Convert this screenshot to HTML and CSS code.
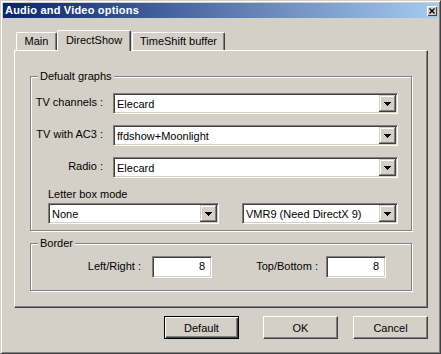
FILE: index.html
```html
<!DOCTYPE html>
<html>
<head>
<meta charset="utf-8">
<link rel="stylesheet" href="styles.css">
</head>
<body>
<div class="window">
  <div class="titlebar">
    <span class="title">Audio and Video options</span>
    <span class="close"><svg width="6" height="6" viewBox="0 0 6 6"><path d="M0.5 0.5l5 5M5.5 0.5l-5 5" stroke="#000" stroke-width="1.3"/></svg></span>
  </div>
  <div class="tabs">
    <div class="tab tab-main">Main</div>
    <div class="tab tab-active">DirectShow</div>
    <div class="tab tab-ts">TimeShift buffer</div>
  </div>
  <div class="panel">
    <div class="group g1">
      <div class="legend">Defualt graphs</div>
      <div class="row first">
        <span class="lbl">TV channels :</span>
        <div class="combo wide"><span class="val">Elecard</span><span class="drop"><svg width="7" height="4" viewBox="0 0 7 4"><path d="M0 0h7v1H0zM1 1h5v1H1zM2 2h3v1H2zM3 3h1v1H3z" fill="#000"/></svg></span></div>
      </div>
      <div class="row">
        <span class="lbl">TV with AC3 :</span>
        <div class="combo wide"><span class="val">ffdshow+Moonlight</span><span class="drop"><svg width="7" height="4" viewBox="0 0 7 4"><path d="M0 0h7v1H0zM1 1h5v1H1zM2 2h3v1H2zM3 3h1v1H3z" fill="#000"/></svg></span></div>
      </div>
      <div class="row">
        <span class="lbl">Radio :</span>
        <div class="combo wide"><span class="val">Elecard</span><span class="drop"><svg width="7" height="4" viewBox="0 0 7 4"><path d="M0 0h7v1H0zM1 1h5v1H1zM2 2h3v1H2zM3 3h1v1H3z" fill="#000"/></svg></span></div>
      </div>
      <div class="lbl-top">Letter box mode</div>
      <div class="pair">
        <div class="combo c-none"><span class="val">None</span><span class="drop"><svg width="7" height="4" viewBox="0 0 7 4"><path d="M0 0h7v1H0zM1 1h5v1H1zM2 2h3v1H2zM3 3h1v1H3z" fill="#000"/></svg></span></div>
        <div class="combo c-vmr"><span class="val">VMR9 (Need DirectX 9)</span><span class="drop"><svg width="7" height="4" viewBox="0 0 7 4"><path d="M0 0h7v1H0zM1 1h5v1H1zM2 2h3v1H2zM3 3h1v1H3z" fill="#000"/></svg></span></div>
      </div>
    </div>
    <div class="group g2">
      <div class="legend">Border</div>
      <div class="brow">
        <span class="lbl lbl-lr">Left/Right :</span>
        <div class="field">8</div>
        <span class="lbl lbl-tb">Top/Bottom :</span>
        <div class="field">8</div>
      </div>
    </div>
  </div>
  <div class="buttons">
    <button class="btn btn-default">Default</button>
    <button class="btn btn-ok">OK</button>
    <button class="btn btn-cancel">Cancel</button>
  </div>
</div>
</body>
</html>
```
FILE: styles.css
```css
html, body {
  margin: 0;
  padding: 0;
  background: #d4d0c8;
}
body {
  font-family: "Liberation Sans", Arial, sans-serif;
  font-size: 11px;
  color: #000;
}
.window {
  width: 441px;
  height: 354px;
  box-sizing: border-box;
  background: #d4d0c8;
  border: 1px solid;
  border-color: #d4d0c8 #404040 #404040 #d4d0c8;
  box-shadow: inset 1px 1px #fff, inset -1px -1px #808080;
  padding: 2px;
}
.titlebar {
  height: 15px;
  background: linear-gradient(to right, #0a246a, #a6caf0);
  display: flex;
  align-items: center;
  justify-content: space-between;
  padding: 0 1px 0 2px;
  color: #fff;
  font-weight: bold;
  font-size: 11px;
  letter-spacing: 0.2px;
}
.title {
  line-height: 15px;
}
.close {
  width: 10px;
  height: 10px;
  box-sizing: border-box;
  background: #d4d0c8;
  box-shadow: inset 1px 1px #fff, inset -1px -1px #404040;
  display: flex;
  align-items: center;
  justify-content: center;
}
.tabs {
  display: flex;
  align-items: flex-end;
  height: 20px;
  margin: 12px 0 0 13px;
}
.tab {
  box-sizing: border-box;
  height: 18px;
  line-height: 16px;
  text-align: center;
  border-top: 1px solid #fff;
  border-left: 1px solid #fff;
  border-right: 1px solid #404040;
  box-shadow: inset -1px 0 #808080;
  border-radius: 2px 2px 0 0;
  background: #d4d0c8;
}
.tab-main {
  width: 41px;
}
.tab-active {
  width: 74px;
  height: 21px;
  line-height: 19px;
  margin-bottom: -1px;
  position: relative;
  z-index: 1;
}
.tab-ts {
  width: 93px;
  margin-left: 1px;
}
.panel {
  margin-left: 11px;
  width: 414px;
  height: 258px;
  box-sizing: border-box;
  border-top: 1px solid #fff;
  border-left: 1px solid #fff;
  border-right: 1px solid #404040;
  border-bottom: 1px solid #404040;
  box-shadow: inset -1px -1px #808080;
  padding: 25px 13px 0 15px;
}
.group {
  width: 382px;
  box-sizing: border-box;
  border: 1px solid #808080;
  box-shadow: inset 1px 1px #fff, 1px 1px #fff;
}
.g1 {
  padding-bottom: 6px;
}
.g2 {
  margin-top: 12px;
  padding-bottom: 12px;
}
.legend {
  margin: -7px 0 0 7px;
  padding: 0 2px;
  width: max-content;
  height: 13px;
  line-height: 13px;
  background: #d4d0c8;
}
.row {
  display: flex;
  align-items: center;
  height: 21px;
  margin-top: 11px;
}
.row.first {
  margin-top: 10px;
}
.lbl {
  width: 72px;
  margin-right: 10px;
  text-align: right;
  line-height: 13px;
  margin-top: -2px;
}
.combo {
  box-sizing: border-box;
  height: 21px;
  background: #fff;
  border: 1px solid;
  border-color: #808080 #fff #fff #808080;
  box-shadow: inset 1px 1px #404040, inset -1px -1px #d4d0c8;
  padding: 1px;
  display: flex;
  align-items: center;
  justify-content: space-between;
}
.wide {
  width: 285px;
}
.val {
  padding-left: 2px;
  white-space: nowrap;
}
.drop {
  width: 17px;
  height: 17px;
  box-sizing: border-box;
  background: #d4d0c8;
  box-shadow: inset -1px -1px #404040, inset 1px 1px #d4d0c8, inset -2px -2px #808080, inset 2px 2px #fff;
  display: flex;
  align-items: center;
  justify-content: center;
}
.drop svg {
  display: block;
}
.lbl-top {
  margin: 10px 0 0 17px;
  height: 13px;
  line-height: 13px;
}
.pair {
  display: flex;
  gap: 23px;
  margin: 2px 0 0 17px;
}
.c-none {
  width: 171px;
}
.c-vmr {
  width: 156px;
}
.brow {
  display: flex;
  align-items: center;
  margin-top: 6px;
}
.lbl-lr {
  width: 110px;
  margin-right: 11px;
}
.lbl-tb {
  width: 106px;
  margin-right: 8px;
}
.field {
  box-sizing: border-box;
  width: 60px;
  height: 22px;
  line-height: 18px;
  background: #fff;
  border: 1px solid;
  border-color: #808080 #fff #fff #808080;
  box-shadow: inset 1px 1px #404040, inset -1px -1px #d4d0c8;
  text-align: right;
  padding-right: 6px;
}
.buttons {
  display: flex;
  justify-content: flex-end;
  margin-top: 8px;
  padding-right: 10px;
}
.btn {
  box-sizing: border-box;
  width: 75px;
  height: 23px;
  margin: 0;
  padding: 0;
  font: inherit;
  color: #000;
  background: #d4d0c8;
  border: 1px solid;
  border-color: #fff #404040 #404040 #fff;
  box-shadow: inset -1px -1px #808080;
  display: flex;
  align-items: center;
  justify-content: center;
}
.btn-default {
  border-color: #000;
  box-shadow: inset 1px 1px #fff, inset -1px -1px #404040, inset -2px -2px #808080;
}
.btn-ok {
  margin-left: 24px;
}
.btn-cancel {
  margin-left: 15px;
}
```
